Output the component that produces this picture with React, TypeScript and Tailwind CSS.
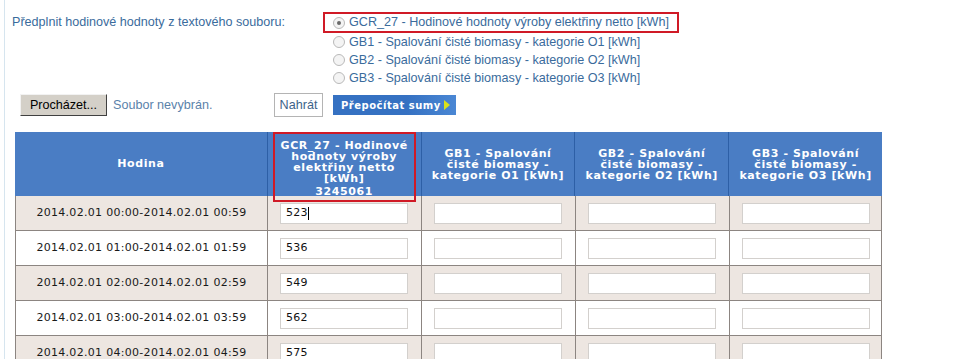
import React from 'react';

const rows = [
  { hour: '2014.02.01 00:00-2014.02.01 00:59', value: '523', caret: true },
  { hour: '2014.02.01 01:00-2014.02.01 01:59', value: '536' },
  { hour: '2014.02.01 02:00-2014.02.01 02:59', value: '549' },
  { hour: '2014.02.01 03:00-2014.02.01 03:59', value: '562' },
  { hour: '2014.02.01 04:00-2014.02.01 04:59', value: '575' },
];

const options = [
  'GCR_27 - Hodinové hodnoty výroby elektřiny netto [kWh]',
  'GB1 - Spalování čisté biomasy - kategorie O1 [kWh]',
  'GB2 - Spalování čisté biomasy - kategorie O2 [kWh]',
  'GB3 - Spalování čisté biomasy - kategorie O3 [kWh]',
];

function Radio({ checked }: { checked?: boolean }) {
  return (
    <span className="w-[12px] h-[12px] rounded-full border border-[#b9b9b9] bg-[#f4f4f4] flex items-center justify-center shrink-0">
      {checked && <span className="w-[4px] h-[4px] rounded-full bg-[#6a6a6a]" />}
    </span>
  );
}

function CellInput({ value, caret }: { value: string; caret?: boolean }) {
  return (
    <div className="w-[128px] h-[21px] bg-white border border-[#d3d0cd] flex items-center pl-[5px] text-[#111]">
      {value}
      {caret && <span className="w-px h-[13px] bg-black" />}
    </div>
  );
}

function GbHeader({ n }: { n: string }) {
  return (
    <div className="w-[154px] border-l border-[#2d5fa6] flex flex-col items-center justify-center leading-[11px]">
      <span>GB{n} - Spalování</span>
      <span>čisté biomasy -</span>
      <span>kategorie O{n} [kWh]</span>
    </div>
  );
}

export default function App() {
  return (
    <div className="min-h-screen bg-white">
      <div className="ml-[4px] min-h-screen border-l border-[#d6e5ef] pt-[12px]">
        {/* Předplnění ze souboru */}
        <div className="flex font-['Liberation_Sans',Arial,sans-serif] text-[12.6px] text-[#3a6b9c]">
          <div className="w-[318px] pl-[7px] h-[21px] flex items-center">
            Předplnit hodinové hodnoty z textového souboru:
          </div>
          <div className="flex flex-col">
            {options.map((o, i) =>
              i === 0 ? (
                <div key={o} className="w-[356px] h-[21px] border-2 border-[#d01a26] flex items-center gap-[4px] pl-[8px]">
                  <Radio checked />
                  <span>{o}</span>
                </div>
              ) : (
                <div key={o} className="h-[18px] flex items-center gap-[4px] pl-[10px]">
                  <Radio />
                  <span>{o}</span>
                </div>
              )
            )}
          </div>
        </div>

        {/* Tlačítka */}
        <div className="flex items-center h-[24px] mt-[6px] font-['Liberation_Sans',Arial,sans-serif] text-[12.6px]">
          <div className="w-[269px] pl-[15px] flex items-center">
            <button className="w-[87px] h-[22px] bg-[#d4d0c8] text-black border border-t-[#f2f2f2] border-l-[#f2f2f2] border-b-[#404040] border-r-[#404040]">
              Procházet...
            </button>
            <span className="ml-[6px] text-[#5a82aa]">Soubor nevybrán.</span>
          </div>
          <button className="w-[49px] h-[24px] bg-white border border-[#b4b4b4] text-[#3d6389]">
            Nahrát
          </button>
          <button className="ml-[10px] w-[123px] h-[20px] bg-gradient-to-r from-[#3571c2] from-60% to-[#4a87d4] text-white font-bold font-['DejaVu_Sans',Verdana,sans-serif] text-[10px] tracking-[0.5px] whitespace-nowrap flex items-center pl-[8px] gap-[3px]">
            Přepočítat sumy
            <svg width="6" height="10" viewBox="0 0 6 10">
              <path d="M0 0 L6 5 L0 10 Z" fill="#d8e21a" />
            </svg>
          </button>
        </div>

        {/* Tabulka */}
        <div className="ml-[10px] mt-[15px] w-[867px] font-['DejaVu_Sans',Verdana,sans-serif] text-[11px] tracking-[0.3px]">
          <div className="flex h-[64px] bg-[#4a7dc4] text-white font-bold tracking-[0.6px] whitespace-nowrap">
            <div className="w-[252px] flex items-center justify-center">Hodina</div>
            <div className="relative w-[154px] border-l border-[#2d5fa6] flex flex-col items-center pt-[8px] leading-[11px]">
              <span>GCR_27 - Hodinové</span>
              <span>hodnoty výroby</span>
              <span>elektřiny netto</span>
              <span>[kWh]</span>
              <span className="mt-[2px]">3245061</span>
              <div className="absolute left-[5px] top-0 w-[143px] h-[70px] border-2 border-[#d01a26] z-10" />
            </div>
            <GbHeader n="1" />
            <GbHeader n="2" />
            <GbHeader n="3" />
          </div>
          {rows.map((r, i) => (
            <div
              key={r.hour}
              className={`flex h-[35px] border-l border-r border-b border-[#8c8581] ${i % 2 === 0 ? 'bg-[#ede6e1]' : 'bg-white'}`}
            >
              <div className="w-[251px] flex items-center justify-center text-[#1a1a1a]">{r.hour}</div>
              <div className="w-[154px] border-l border-[#8c8581] flex items-center pl-[12px]">
                <CellInput value={r.value} caret={r.caret} />
              </div>
              <div className="w-[154px] border-l border-[#8c8581] flex items-center pl-[12px]">
                <CellInput value="" />
              </div>
              <div className="w-[154px] border-l border-[#8c8581] flex items-center pl-[12px]">
                <CellInput value="" />
              </div>
              <div className="w-[152px] border-l border-[#8c8581] flex items-center pl-[12px]">
                <CellInput value="" />
              </div>
            </div>
          ))}
        </div>
      </div>
    </div>
  );
}
